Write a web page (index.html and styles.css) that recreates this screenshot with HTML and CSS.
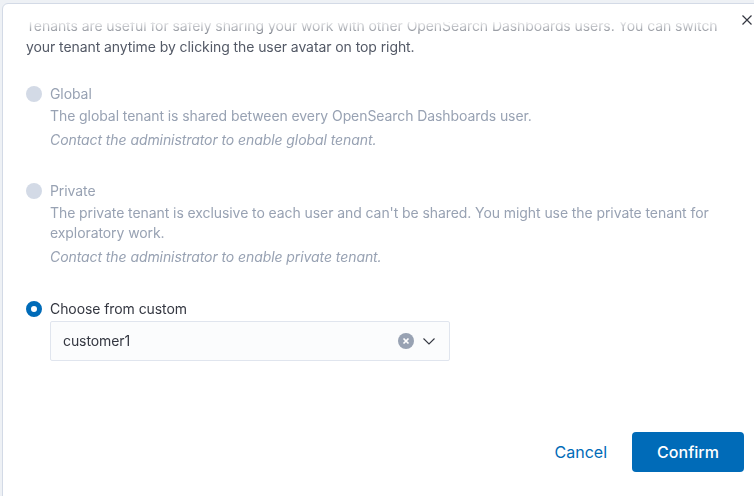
FILE: index.html
```html
<!DOCTYPE html>
<html lang="en">
<head>
  <meta charset="UTF-8">
  <title>Select your tenant</title>
  <link rel="stylesheet" href="styles.css">
</head>
<body>
  <div class="modal">
    <button class="modal-close" aria-label="Close">
      <svg width="16" height="16" viewBox="0 0 16 16"><path d="M3.5 3.5l9 9M12.5 3.5l-9 9" stroke="#343741" stroke-width="1.2" fill="none"/></svg>
    </button>

    <div class="modal-body" id="modalBody">
      <p class="intro">Tenants are useful for safely sharing your work with other OpenSearch Dashboards users. You can switch your tenant anytime by clicking the user avatar on top right.</p>

      <div class="radio-group">
        <div class="radio-item disabled">
          <span class="radio"></span>
          <div class="radio-content">
            <div class="radio-label">Global</div>
            <div class="radio-desc">The global tenant is shared between every OpenSearch Dashboards user.</div>
            <div class="radio-note">Contact the administrator to enable global tenant.</div>
          </div>
        </div>

        <div class="radio-item disabled">
          <span class="radio"></span>
          <div class="radio-content">
            <div class="radio-label">Private</div>
            <div class="radio-desc">The private tenant is exclusive to each user and can't be shared. You might use the private tenant for exploratory work.</div>
            <div class="radio-note">Contact the administrator to enable private tenant.</div>
          </div>
        </div>

        <div class="radio-item custom">
          <span class="radio checked"></span>
          <div class="radio-content">
            <div class="radio-label">Choose from custom</div>
            <div class="combo">
              <span class="combo-value">customer1</span>
              <span class="combo-clear">
                <svg width="16" height="16" viewBox="0 0 16 16"><circle cx="8" cy="8" r="8" fill="#98a2b3"/><path d="M5.5 5.5l5 5M10.5 5.5l-5 5" stroke="#fff" stroke-width="1.7"/></svg>
              </span>
              <span class="combo-arrow">
                <svg width="16" height="16" viewBox="0 0 16 16"><path d="M2.5 5.5l5.5 5.5 5.5-5.5" stroke="#343741" stroke-width="1.1" fill="none"/></svg>
              </span>
            </div>
          </div>
        </div>
      </div>
    </div>

    <div class="modal-footer">
      <button class="btn-empty">Cancel</button>
      <button class="btn-primary">Confirm</button>
    </div>
  </div>

  <script>
    // keep the body scrolled a little, as in the open dialog
    document.getElementById("modalBody").scrollTop = 7;
  </script>
</body>
</html>
```

FILE: styles.css
```css
* {
  box-sizing: border-box;
}

body {
  margin: 0;
  padding: 3px 0 0 2px;
  background: #eef1f5;
  font-family: Inter, "Noto Sans", sans-serif;
  font-size: 14px;
  letter-spacing: -0.08px;
  color: #343741;
  overflow: hidden;
  height: 496px;
}

.modal {
  position: relative;
  width: 767px;
  height: 560px;
  background: #fff;
  border: 1px solid #d3dae6;
  border-radius: 6px;
  display: flex;
  flex-direction: column;
}

.modal-close {
  position: absolute;
  top: 4px;
  right: 9px;
  width: 24px;
  height: 24px;
  padding: 4px;
  border: none;
  background: none;
  cursor: pointer;
}

.modal-body {
  margin-top: 18px;
  height: 390px;
  padding: 0 25px 80px 23px;
  overflow: hidden;
  -webkit-mask-image: linear-gradient(to bottom, rgba(0,0,0,0.1) 0, #000 16px);
  mask-image: linear-gradient(to bottom, rgba(0,0,0,0.1) 0, #000 16px);
}

.intro {
  margin: 0;
  line-height: 21px;
  color: #535966;
}

.radio-group {
  margin-top: 27px;
  display: flex;
  flex-direction: column;
  gap: 31px;
}

.radio-item {
  display: flex;
  gap: 8px;
  align-items: flex-start;
}

.radio-item.custom {
  margin-top: 1px;
}

.radio {
  flex: none;
  width: 16px;
  height: 16px;
  margin-top: 2px;
  border-radius: 50%;
  background: #d3dae6;
}

.radio.checked {
  background: #fff;
  border: 5px solid #006bb8;
}

.radio-content {
  flex: 1;
  line-height: 20px;
}

.disabled .radio-content {
  color: #98a2b3;
}

.radio-label {
  margin-bottom: 2px;
}

.radio-note {
  margin-top: 4px;
  font-style: italic;
}

.combo {
  display: flex;
  align-items: center;
  width: 400px;
  height: 40px;
  padding: 0 12px;
  background: #fbfcfd;
  border: 1px solid #e0e5ee;
  border-radius: 2px;
}

.combo-value {
  flex: 1;
  color: #343741;
}

.combo-clear,
.combo-arrow {
  display: flex;
  width: 16px;
  height: 16px;
}

.combo-arrow {
  margin-left: 7px;
}

.modal-footer {
  display: flex;
  justify-content: flex-end;
  align-items: center;
  gap: 11px;
  padding: 20px 24px 0 0;
}

.btn-empty,
.btn-primary {
  height: 40px;
  font-family: inherit;
  font-size: 16px;
  border: none;
  border-radius: 4px;
  cursor: pointer;
}

.btn-empty {
  padding: 0 14px;
  background: none;
  color: #006bb8;
}

.btn-primary {
  width: 112px;
  background: #006bb8;
  color: #fff;
  font-weight: 500;
}
```
